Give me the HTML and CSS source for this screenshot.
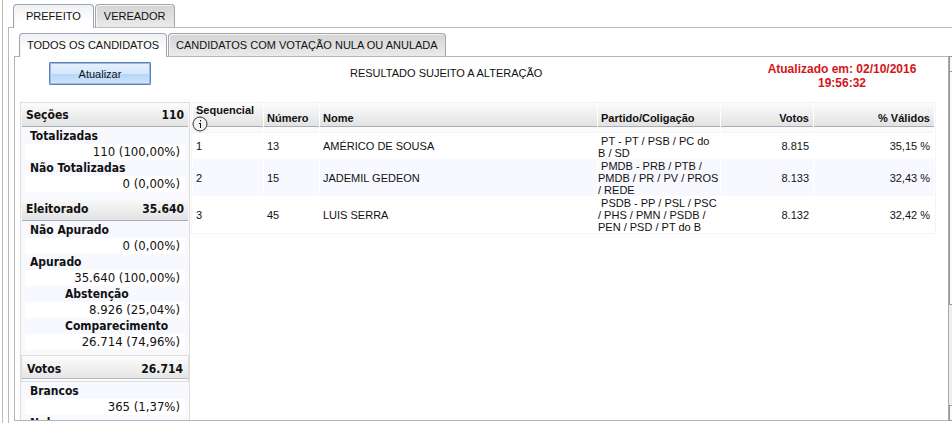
FILE: index.html
```html
<!DOCTYPE html>
<html lang="pt-br">
<head>
    <meta charset="UTF-8">
    <meta name="viewport" content="width=device-width, initial-scale=1.0">
    <title>Resultado - Prefeito</title>
    <link rel="stylesheet" href="styles.css">
</head>
<body>

<div class="pagina">
    <nav class="abas">
        <a href="#prefeito" class="aba ativa">PREFEITO</a>
        <a href="#vereador" class="aba">VEREADOR</a>
    </nav>
    <div class="painel-cargo">
        <nav class="abas">
            <a href="#todos" class="aba ativa">TODOS OS CANDIDATOS</a>
            <a href="#nulos" class="aba">CANDIDATOS COM VOTAÇÃO NULA OU ANULADA</a>
        </nav>
        <div class="painel-linha">
            <main class="painel">
                <header class="topo">
                    <div class="topo-botao"><button type="button" class="atualizar">Atualizar</button></div>
                    <div class="aviso">RESULTADO SUJEITO A ALTERAÇÃO</div>
                    <div class="atualizado">Atualizado em: 02/10/2016 19:56:32</div>
                </header>
                <div class="conteudo">
                    <aside class="resumo">
                        <h2 class="titulo"><span>Seções</span><span>110</span></h2>
                        <dl class="dados">
                            <dt>Totalizadas</dt>
                            <dd>110 (100,00%)</dd>
                            <dt>Não Totalizadas</dt>
                            <dd>0 (0,00%)</dd>
                        </dl>
                        <h2 class="titulo"><span>Eleitorado</span><span>35.640</span></h2>
                        <dl class="dados">
                            <dt>Não Apurado</dt>
                            <dd>0 (0,00%)</dd>
                            <dt>Apurado</dt>
                            <dd>35.640 (100,00%)</dd>
                            <dt class="sub">Abstenção</dt>
                            <dd>8.926 (25,04%)</dd>
                            <dt class="sub">Comparecimento</dt>
                            <dd>26.714 (74,96%)</dd>
                        </dl>
                        <h2 class="titulo destaque"><span>Votos</span><span>26.714</span></h2>
                        <dl class="dados">
                            <dt>Brancos</dt>
                            <dd>365 (1,37%)</dd>
                            <dt>Nulos</dt>
                        </dl>
                    </aside>
                    <div class="resultado">
                        <table class="candidatos">
                            <colgroup>
                                <col class="col-seq">
                                <col class="col-num">
                                <col class="col-nome">
                                <col class="col-partido">
                                <col class="col-votos">
                                <col class="col-validos">
                            </colgroup>
                            <thead>
                                <tr>
                                    <th class="seq">Sequencial
                                        <svg class="info" viewBox="0 0 16 16">
                                            <circle cx="8" cy="8" r="7" fill="#f2f2f2" stroke="#333" stroke-width="1"/>
                                            <path d="M8.5 4V5.5M7 7.5H8.5M8.5 7V12" fill="none" stroke="#111" stroke-width="1"/>
                                        </svg>
                                    </th>
                                    <th>Número</th>
                                    <th>Nome</th>
                                    <th>Partido/Coligação</th>
                                    <th class="valor">Votos</th>
                                    <th class="valor">% Válidos</th>
                                </tr>
                            </thead>
                            <tbody>
                                <tr>
                                    <td>1</td>
                                    <td>13</td>
                                    <td>AMÉRICO DE SOUSA</td>
                                    <td class="partido">&nbsp;PT - PT / PSB / PC do B&nbsp;/&nbsp;SD</td>
                                    <td class="valor">8.815</td>
                                    <td class="valor">35,15 %</td>
                                </tr>
                                <tr>
                                    <td>2</td>
                                    <td>15</td>
                                    <td>JADEMIL GEDEON</td>
                                    <td class="partido">&nbsp;PMDB - PRB / PTB / PMDB / PR / PV / PROS /&nbsp;REDE</td>
                                    <td class="valor">8.133</td>
                                    <td class="valor">32,43 %</td>
                                </tr>
                                <tr>
                                    <td>3</td>
                                    <td>45</td>
                                    <td>LUIS SERRA</td>
                                    <td class="partido">&nbsp;PSDB - PP / PSL / PSC /&nbsp;PHS / PMN / PSDB / PEN / PSD / PT do B</td>
                                    <td class="valor">8.132</td>
                                    <td class="valor">32,42 %</td>
                                </tr>
                            </tbody>
                        </table>
                    </div>
                </div>
            </main>
            <div class="rolagem">
                <div class="seta"></div>
                <div class="cursor"></div>
                <div class="trilho"></div>
                <div class="seta"></div>
            </div>
        </div>
    </div>
</div>

</body>
</html>
```

FILE: styles.css
```css
* {
    box-sizing: border-box;
}
body {
    margin: 0;
    font-family: "Liberation Sans", Arial, sans-serif;
    font-size: 11px;
    color: #111;
    background: #fff;
}
.pagina {
    display: flex;
    flex-direction: column;
    height: 100vh;
    margin-left: 2px;
    padding: 4px 0 0 5px;
    border-left: 1px solid #bbb;
    overflow: hidden;
}

/* abas */
.abas {
    display: flex;
    gap: 1px;
    padding-left: 5px;
}
.aba {
    height: 23px;
    padding: 0 12px;
    border: 1px solid #a5a5a8;
    border-bottom: 0;
    border-radius: 4px 4px 0 0;
    background: linear-gradient(#d4d4d4, #eaeaea);
    box-shadow: inset 1px 1px 0 #f4f4f4;
    line-height: 23px;
    color: #111;
    text-decoration: none;
    white-space: nowrap;
}
.pagina > .abas .aba + .aba {
    padding: 0 8px;
}
.painel-cargo .abas .aba {
    padding: 0 7px;
}
.aba.ativa {
    height: 24px;
    margin-bottom: -1px;
    border-color: #94a5bd;
    background: linear-gradient(#f0f0f0, #fff 70%);
    position: relative;
}
.painel-cargo {
    display: flex;
    flex: 1;
    flex-direction: column;
    min-height: 0;
    padding: 5px 0 2px 5px;
    border-top: 1px solid #bbb;
    border-left: 1px solid #bbb;
}
.painel-linha {
    display: flex;
    flex: 1;
    min-height: 0;
}
.painel {
    display: flex;
    flex: 1;
    flex-direction: column;
    min-width: 0;
    padding: 5px 12px 0 5px;
    border: 1px solid #b4b4b4;
    border-right: 0;
    overflow: hidden;
}

/* topo */
.topo {
    display: grid;
    grid-template-columns: 170px 1fr 188px;
    height: 40px;
}
.topo-botao {
    padding-left: 29px;
}
.atualizar {
    width: 102px;
    height: 23px;
    padding: 0;
    border: 1px solid #5a82b8;
    border-radius: 1px;
    outline: 1px solid #9dbbe0;
    outline-offset: -2px;
    background: linear-gradient(#e6f1fd, #d3e7fc 50%, #b7d7f8 55%, #cfe4fb);
    font: 11px "Liberation Sans", Arial, sans-serif;
    color: #111;
}
.aviso {
    padding: 4px 0 0 160px;
    line-height: 14px;
}
.atualizado {
    text-align: center;
    font-size: 12px;
    font-weight: bold;
    line-height: 14px;
    color: #d3151b;
}

/* resumo lateral */
.conteudo {
    display: flex;
    flex: 1;
    gap: 1px;
    min-height: 0;
}
.resumo {
    width: 170px;
    flex: none;
    border: 1px solid #ddd;
    border-bottom: 0;
    background: #f8f8ff;
    font-family: "DejaVu Sans Condensed", Tahoma, sans-serif;
    font-size: 12px;
    line-height: 16px;
}
.titulo {
    display: flex;
    justify-content: space-between;
    margin: 0 1px;
    padding: 1px 4px 0;
    border-bottom: 1px solid #a9afb9;
    background: linear-gradient(#fcfcfc, #e2e2e2);
    font-size: 12px;
    line-height: 22px;
}
.titulo.destaque {
    margin: 0;
    padding: 2px 5px 0;
    border: 1px solid #ddd;
    box-shadow: inset 0 -2px 0 #fafafa, inset 0 -3px 0 #b4bac3;
    line-height: 23px;
}
.dados {
    margin: 0 4px;
    padding: 1px 0 5px;
}
.dados dt {
    padding-left: 5px;
    font-weight: bold;
}
.dados .sub {
    padding-left: 40px;
}
.dados dd {
    margin: 0;
    padding-right: 5px;
    background: #fff;
    font-size: 13px;
    text-align: right;
}

/* tabela de candidatos */
.resultado {
    flex: 1;
    min-width: 0;
}
.candidatos {
    width: 100%;
    table-layout: fixed;
    border: 1px solid #f5f5f5;
    border-collapse: separate;
    border-spacing: 1px 0;
    line-height: 12px;
}
.col-seq {
    width: 70px;
}
.col-num {
    width: 55px;
}
.col-partido {
    width: 122px;
}
.col-votos {
    width: 92px;
}
.col-validos {
    width: 120px;
}
.candidatos th {
    height: 30px;
    padding: 0 3px 8px;
    border-bottom: 1px solid #f3f3f3;
    background: linear-gradient(#fcfcfc, #e2e2e2 23px, #a9afb9 23px, #a9afb9 24px, #fafafa 24px);
    text-align: left;
    vertical-align: bottom;
}
.candidatos .seq {
    padding: 1px 3px 0;
    vertical-align: top;
}
.info {
    display: block;
    width: 16px;
    height: 16px;
    margin: 0 0 0 -4px;
}
.candidatos td {
    height: 26px;
    padding: 0 3px;
}
.candidatos .partido {
    padding: 1px 0 0;
}
.candidatos .valor {
    padding-right: 4px;
    text-align: right;
}
.candidatos tr:nth-child(even) td {
    background: #f8f8ff;
}

/* barra de rolagem cortada pela borda */
.rolagem {
    display: flex;
    flex-direction: column;
    width: 4px;
    border-left: 1px solid #aaa;
    background: #eee;
}
.seta {
    height: 16px;
    border: 1px solid #999;
    border-right: 0;
    background: #fafafa;
}
.cursor {
    flex: 7;
    border: 1px solid #999;
    border-top: 0;
    border-right: 0;
    background: #fafafa;
}
.trilho {
    flex: 3;
}
```
